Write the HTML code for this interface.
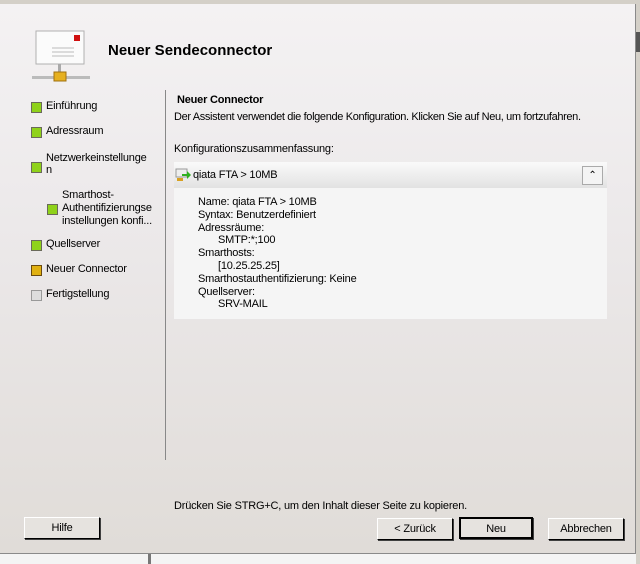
<!DOCTYPE html>
<html><head><style>
body{margin:0;width:640px;height:564px;overflow:hidden;background:#f4f4f4;font-family:"Liberation Sans",sans-serif;font-size:11px;letter-spacing:-0.2px;color:#000;position:relative}
.dlg{position:absolute;left:0;top:4px;width:636px;height:550px;background:linear-gradient(180deg,#f4f2f3 0%,#ece9ea 40%,#e0dcd8 100%);border-right:1px solid #8a8a8a;border-bottom:1px solid #8a8a8a;box-sizing:border-box}
.a{position:absolute;white-space:nowrap}
.sq{position:absolute;width:9px;height:9px;border:1px solid #6a6a5a;background:#8fd21a}
.btn{position:absolute;height:22px;border:1px solid #000;border-top-color:#fff;border-left-color:#fff;box-shadow:1px 1px 0 #404040;background:#e6e3df;text-align:center;line-height:21px;box-sizing:border-box}
</style></head><body>
<div class="a" style="left:0;top:0;width:640px;height:4px;background:#d4d0c8"></div>
<div class="a" style="left:636px;top:0;width:4px;height:564px;background:#d4d0c8"></div>
<div class="a" style="left:636px;top:32px;width:4px;height:20px;background:#555"></div>
<div class="dlg">
<svg class="a" style="left:30px;top:26px" width="62" height="56">
<rect x="6" y="1" width="48" height="33" fill="#fbfbfb" stroke="#b0b0b0"/>
<rect x="44" y="5" width="6" height="6" fill="#d01010"/>
<line x1="22" y1="18" x2="44" y2="18" stroke="#bbb"/><line x1="22" y1="22" x2="44" y2="22" stroke="#bbb"/><line x1="22" y1="26" x2="44" y2="26" stroke="#bbb"/>
<rect x="28" y="34" width="3" height="10" fill="#aaa"/>
<rect x="2" y="46" width="58" height="3" fill="#bbb"/>
<rect x="24" y="42" width="12" height="9" fill="#e6b020" stroke="#a07010"/>
</svg>
<div class="a" style="left:108px;top:38px;font-size:15px;font-weight:bold;letter-spacing:0">Neuer Sendeconnector</div>
<div class="sq" style="left:31px;top:98px"></div><div class="a" style="left:46px;top:96px">Einführung</div>
<div class="sq" style="left:31px;top:123px"></div><div class="a" style="left:46px;top:121px">Adressraum</div>
<div class="sq" style="left:31px;top:158px"></div><div class="a" style="left:46px;top:148px;line-height:12px">Netzwerkeinstellunge<br>n</div>
<div class="sq" style="left:47px;top:200px"></div><div class="a" style="left:62px;top:185px;line-height:13px">Smarthost-<br>Authentifizierungse<br>instellungen konfi...</div>
<div class="sq" style="left:31px;top:236px"></div><div class="a" style="left:46px;top:234px">Quellserver</div>
<div class="sq" style="left:31px;top:261px;background:#e0b010;border-color:#6a4a10"></div><div class="a" style="left:46px;top:259px">Neuer Connector</div>
<div class="sq" style="left:31px;top:286px;background:#ddd;border-color:#999"></div><div class="a" style="left:46px;top:284px">Fertigstellung</div>
<div class="a" style="left:165px;top:86px;width:1px;height:370px;background:#888"></div>
<div class="a" style="left:177px;top:90px;font-weight:bold">Neuer Connector</div>
<div class="a" style="left:174px;top:107px;letter-spacing:-0.35px">Der Assistent verwendet die folgende Konfiguration. Klicken Sie auf Neu, um fortzufahren.</div>
<div class="a" style="left:174px;top:139px">Konfigurationszusammenfassung:</div>
<div class="a" style="left:174px;top:158px;width:433px;height:26px;background:linear-gradient(#fafafa,#e2e2e2)"></div>
<svg class="a" style="left:175px;top:164px" width="16" height="14"><rect x="1" y="1" width="11" height="8" fill="#eee" stroke="#999"/><rect x="2" y="10" width="6" height="3" fill="#d8a020"/><path d="M7 6h5V3l4 4-4 4V8H7z" fill="#30b020"/></svg>
<div class="a" style="left:193px;top:165px">qiata FTA &gt; 10MB</div>
<div class="a" style="left:582px;top:162px;width:21px;height:19px;border:1px solid #aaa;background:#f4f4f4;box-sizing:border-box;text-align:center;line-height:17px;font-size:10px">&#8963;</div>
<div class="a" style="left:174px;top:184px;width:433px;height:131px;background:#f5f5f5"></div>
<div class="a" style="left:198px;top:192px;line-height:12.8px">Name: qiata FTA &gt; 10MB<br>Syntax: Benutzerdefiniert<br>Adressräume:<br>&nbsp;&nbsp;&nbsp;&nbsp;&nbsp;&nbsp;&nbsp;SMTP:*;100<br>Smarthosts:<br>&nbsp;&nbsp;&nbsp;&nbsp;&nbsp;&nbsp;&nbsp;[10.25.25.25]<br>Smarthostauthentifizierung: Keine<br>Quellserver:<br>&nbsp;&nbsp;&nbsp;&nbsp;&nbsp;&nbsp;&nbsp;SRV-MAIL</div>
<div class="a" style="left:174px;top:496px">Drücken Sie STRG+C, um den Inhalt dieser Seite zu kopieren.</div>
<div class="btn" style="left:24px;top:513px;width:76px">Hilfe</div>
<div class="btn" style="left:377px;top:514px;width:76px">&lt; Zurück</div>
<div class="btn" style="left:459px;top:513px;width:74px;border:2px solid #000;">Neu</div>
<div class="btn" style="left:548px;top:514px;width:76px">Abbrechen</div>
</div>
<div class="a" style="left:148px;top:554px;width:3px;height:10px;background:#777"></div>
</body></html>
